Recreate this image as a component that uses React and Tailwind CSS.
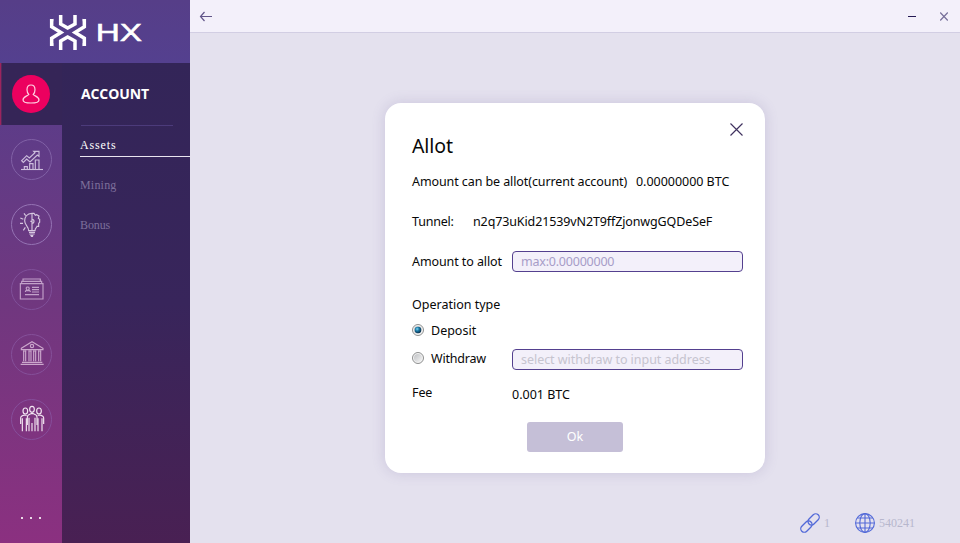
import React from "react";

const SONG = "font-['Liberation_Serif',serif] text-[12px] leading-[14px]";

function Logo() {
  return (
    <svg width="190" height="63" viewBox="0 0 570 189" fill="none">
      <g stroke="#fff" strokeWidth="10.500" strokeLinejoin="miter">
        <path d="M182 45V72L203 84L225 72V45" />
        <path d="M182 150V123L203 111L225 123V150" />
        <path d="M155 57V80L183 97.500L155 115V138" />
        <path d="M253 57V80L225 97.500L253 115V138" />
      </g>
      <path d="M150 61l10-5v8l-10 5zM258 61l-10-5v8l10 5zM150 133l10 6v-9l-10-5zM258 133l-10 6v-9l10-5z" fill="#fff" />
      <text x="287" y="122" fill="#fff" stroke="#fff" strokeWidth="1.500" fontFamily="Liberation Sans, sans-serif" fontWeight="400" fontSize="71" textLength="139" lengthAdjust="spacingAndGlyphs">HX</text>
    </svg>
  );
}

function UserIcon() {
  return (
    <svg width="38" height="38" viewBox="0 0 38 38" fill="none" stroke="#ffd0e2" strokeWidth="1.200">
      <path d="M15 14.800C15 12 16.600 10 19 10s4 2 4 4.800c0 2-.7 3.600-1.800 4.700 1.200 1.500 5.800 2 5.800 5.400 0 2.100-3.500 3.100-8 3.100s-8-1-8-3.100c0-3.400 4.600-3.900 5.800-5.400-1.100-1.100-1.800-2.700-1.800-4.700z" />
    </svg>
  );
}

function ChartIcon() {
  return (
    <g>
      <path d="M63 118.500H129" />
      <path d="M73 118V110H82V118M89 118V101H99V118M106 118V90H117V118" />
      <path d="M65 92L80 77L88 84L105 68L101 64H117V79L112 75L90 96L80 87L70 97Z" />
    </g>
  );
}

function IdeaIcon() {
  return (
    <g>
      <path d="M96 250C80 250 74 262 74 272C74 286 86 289 86 302H105C105 294 111 293 111 289H116V280L119 277V268L115 265L117 258L110 254L106 256L102 250Z" />
      <path d="M96 250V300M96 268A6 6 0 1 1 96 280M91 274H96M87 307H105M88 312H104M91 317H100" />
      <path d="M72 250L77 257M61 264L70 268M60 280H69M70 301L76 292M93 319H99" />
    </g>
  );
}

function CardIcon() {
  return (
    <g>
      <path d="M61 85H129V131H61ZM65 84V78H125V84M69 77V71H121V77" />
      <path d="M76 110C76 105 80 105 81 103C77 99 78 95 83 95S89 99 86 103C87 105 91 105 91 110M78 106H88M96 96H117M96 103H117M96 110H117M75 118H117" />
    </g>
  );
}

function BankIcon() {
  return (
    <g>
      <path d="M64 279L96 259L129 279V283H64Z" />
      <circle cx="96" cy="272" r="5" />
      <path d="M71 285V318M77 285V318M87 285V318M93 285V318M101 285V318M107 285V318M116 285V318M122 285V318M69 287H79M85 287H95M99 287H109M114 287H124M66 321H127M62 327H131" />
    </g>
  );
}

function PeopleIcon() {
  return (
    <g>
      <ellipse cx="96" cy="177" rx="7" ry="9" />
      <ellipse cx="76" cy="182" rx="7" ry="9" />
      <ellipse cx="117" cy="182" rx="7" ry="9" />
      <path d="M82 224V200C82 193 88 192 93 190H100C105 192 111 193 111 200V224M87 202V243M96 218V243M105 202V243" />
      <path d="M62 221V202C62 196 68 196 73 194L80 195M67 204V243M79 204V243M131 221V202C131 196 125 196 120 194L113 195M126 204V243M114 204V243" />
    </g>
  );
}

const RAIL = [
  { id: "trade", icon: ChartIcon, box: "33 27 123 123", tone: "stroke-[#cdbedd]", ring: "border-[#8161a6]" },
  { id: "ideas", icon: IdeaIcon, box: "33 222 123 123", tone: "stroke-[#d6c6df]", ring: "border-[#9573b4]" },
  { id: "cards", icon: CardIcon, box: "33 41 123 123", tone: "stroke-[#c2a0c9]", ring: "border-[#80509a]" },
  { id: "bank", icon: BankIcon, box: "33 236 123 123", tone: "stroke-[#cba7cc]", ring: "border-[#85509a]" },
  { id: "people", icon: PeopleIcon, box: "33 146 123 123", tone: "stroke-[#f4e8f3]", ring: "border-[#864e9b]" },
];

function Sidebar() {
  return (
    <aside className="flex h-full w-[190px] shrink-0 flex-col">
      <div className="h-[63px] bg-linear-to-b from-[#563e88] to-[#54408f]">
        <Logo />
      </div>
      <div className="flex min-h-0 flex-1">
        <nav className="flex w-[62px] flex-col bg-linear-to-b from-[#573d8b] via-[#70377f] to-[#8b3080]">
          <div className="flex h-[62px] items-center justify-center bg-linear-to-r from-[#c00f5f] to-[#352557] to-[2px]">
            <div className="flex size-[38px] items-center justify-center rounded-full bg-[#ec005f]">
              <UserIcon />
            </div>
          </div>
          <div className="mt-0.5 flex flex-col">
            {RAIL.map(({ id, icon: Icon, box, tone, ring }) => (
              <div key={id} className="flex h-[65px] items-center pl-[11px]">
                <div className={"size-[41px] rounded-full border " + ring}>
                  <svg className={"-m-px size-[41px] fill-none stroke-[3.4px] " + tone} viewBox={box}>
                    <Icon />
                  </svg>
                </div>
              </div>
            ))}
          </div>
          <div className="mt-auto mb-6 flex justify-center gap-[7px]">
            <i className="size-0.5 bg-[#ecdbe9]" />
            <i className="size-0.5 bg-[#ecdbe9]" />
            <i className="size-0.5 bg-[#ecdbe9]" />
          </div>
        </nav>
        <section className="flex w-32 flex-col bg-linear-to-b from-[#332558] via-[#38255b] to-[#492053] pl-[18px]">
          <h1 className="mt-[21px] ml-px font-['Open_Sans','Noto_Sans',sans-serif] text-[14px] leading-5 font-bold tracking-[-0.12px] text-white">
            ACCOUNT
          </h1>
          <div className="mt-[21px] ml-[1px] h-px w-[92px] bg-[#4c3b7b]" />
          <div className={"mt-3 h-[19px] border-b border-[#e9e5ef] tracking-[0.85px] text-white " + SONG}>Assets</div>
          <div className={"mt-[21px] tracking-[0.2px] text-[#7d6f9a] " + SONG}>Mining</div>
          <div className={"mt-[26px] tracking-[-0.1px] text-[#7d6f9a] " + SONG}>Bonus</div>
        </section>
      </div>
    </aside>
  );
}

function TitleBar() {
  return (
    <header className="flex h-[33px] items-center border-b border-[#d2cee3] bg-[#f3f0fa] pr-3 pl-[9px]">
      <svg width="14" height="12" viewBox="0 0 14 12" fill="none" stroke="#625689" strokeWidth="1.200">
        <path d="M13 6.500H1.500M5.500 2L1.500 6.500L5.500 11" />
      </svg>
      <div className="ml-auto h-px w-2 bg-[#241953]" />
      <svg className="ml-6" width="8" height="9" viewBox="0 0 8 9" stroke="#77709a" strokeWidth="1.200">
        <path d="M.2.5L7.800 8.500M7.800.5L.2 8.500" />
      </svg>
    </header>
  );
}

function Radio({ checked }) {
  return (
    <svg className="-mt-0.5" width="12" height="12" viewBox="0 0 12 12">
      <defs>
        <radialGradient id="dot" cx="38%" cy="35%" r="65%">
          <stop offset="0" stopColor="#7fd6f3" />
          <stop offset=".45" stopColor="#1b7ba8" />
          <stop offset="1" stopColor="#0b2f4c" />
        </radialGradient>
        <linearGradient id="well" x1="0" y1="0" x2="1" y2="1">
          <stop offset="0" stopColor="#bfc1c4" />
          <stop offset="1" stopColor="#f5f5f5" />
        </linearGradient>
      </defs>
      <circle cx="6" cy="6" r="5.500" fill="#f4f4f4" stroke="#8e8f8f" />
      <circle cx="6" cy="6" r="4" fill="url(#well)" />
      {checked && <circle cx="6" cy="6" r="3.300" fill="url(#dot)" />}
    </svg>
  );
}

function AllotDialog() {
  return (
    <div className="mt-[70px] ml-[195px] flex h-[370px] w-[380px] flex-col rounded-2xl bg-white pl-[27px] font-['Noto_Sans','Open_Sans',sans-serif] text-[12.5px] leading-5 tracking-[-0.09px] text-[#080808] shadow-[0_0_14px_rgba(100,85,150,0.2)]">
      <svg className="mt-5 ml-[318px] shrink-0" width="13" height="13" viewBox="0 0 13 13" stroke="#40325f" strokeWidth="1.150">
        <path d="M.5.5L12.500 12.500M12.500.5L.5 12.500" />
      </svg>
      <h2 className="-mt-[3px] text-[19.500px] leading-[26px]">Allot</h2>
      <div className="mt-[13px] flex">
        <span className="w-[224px] whitespace-nowrap">Amount can be allot(current account)</span>
        <span className="whitespace-nowrap tracking-[-0.03px]">0.00000000 BTC</span>
      </div>
      <div className="mt-5 flex">
        <span className="w-[61px] tracking-[-0.2px]">Tunnel:</span>
        <span className="tracking-[-0.12px]">n2q73uKid21539vN2T9ffZjonwgGQDeSeF</span>
      </div>
      <div className="mt-5 flex h-5">
        <span className="w-[100px]">Amount to allot</span>
        <div className="-mt-px h-[21px] w-[231px] rounded-[4px] border border-[#54408f] bg-[#f3f0fa] pl-2 leading-[19px] tracking-[-0.22px] text-[#a79dc8]">max:0.00000000</div>
      </div>
      <div className="mt-[23px] tracking-normal">Operation type</div>
      <div className="mt-[6px] flex items-center gap-[7px] tracking-normal">
        <Radio checked />
        <span>Deposit</span>
      </div>
      <div className="mt-2 flex h-[21px]">
        <div className="flex h-5 w-[100px] items-center gap-[7px] tracking-[-0.2px]">
          <Radio />
          <span>Withdraw</span>
        </div>
        <div className="h-[21px] w-[231px] rounded-[4px] border border-[#54408f] bg-[#f3f0fa] pl-2 leading-[19px] tracking-[-0.04px] text-[#c6c4cf]">select withdraw to input address</div>
      </div>
      <div className="mt-[13px] flex">
        <span className="w-[100px]">Fee</span>
        <span className="pt-0.5 tracking-normal">0.001 BTC</span>
      </div>
      <button className="mt-[17px] ml-[115px] h-[30px] w-24 shrink-0 rounded-[3px] bg-[#c5bfd7] text-white">Ok</button>
    </div>
  );
}

function StatusBar() {
  return (
    <footer className="mt-auto mb-[10px] ml-[610px] flex h-5 items-center">
      <svg width="20" height="20" viewBox="0 0 20 20" fill="none" stroke="#5269d8" strokeWidth="1.300">
        <rect x="7.100" y="2.900" width="13" height="7" rx="3.500" transform="rotate(-45 13.600 6.400)" />
        <rect x="-.1" y="10.100" width="13" height="7" rx="3.500" transform="rotate(-45 6.400 13.600)" />
      </svg>
      <span className={"ml-1 w-[31px] text-[#b7b7cd] " + SONG}>1</span>
      <svg width="20" height="20" viewBox="0 0 20 20" fill="none" stroke="#5269d8" strokeWidth="1.100">
        <circle cx="10" cy="10" r="9.400" />
        <ellipse cx="10" cy="10" rx="5.200" ry="9.400" />
        <path d="M10 .6V19.400M.6 10H19.400M2.500 5H17.500M2.500 15H17.500" />
      </svg>
      <span className={"ml-1 text-[#b7b7cd] " + SONG}>540241</span>
    </footer>
  );
}

export default function App() {
  return (
    <div className="flex h-[543px] w-[960px] overflow-hidden bg-[#e4e1ee]">
      <Sidebar />
      <main className="flex min-w-0 flex-1 flex-col">
        <TitleBar />
        <AllotDialog />
        <StatusBar />
      </main>
    </div>
  );
}
